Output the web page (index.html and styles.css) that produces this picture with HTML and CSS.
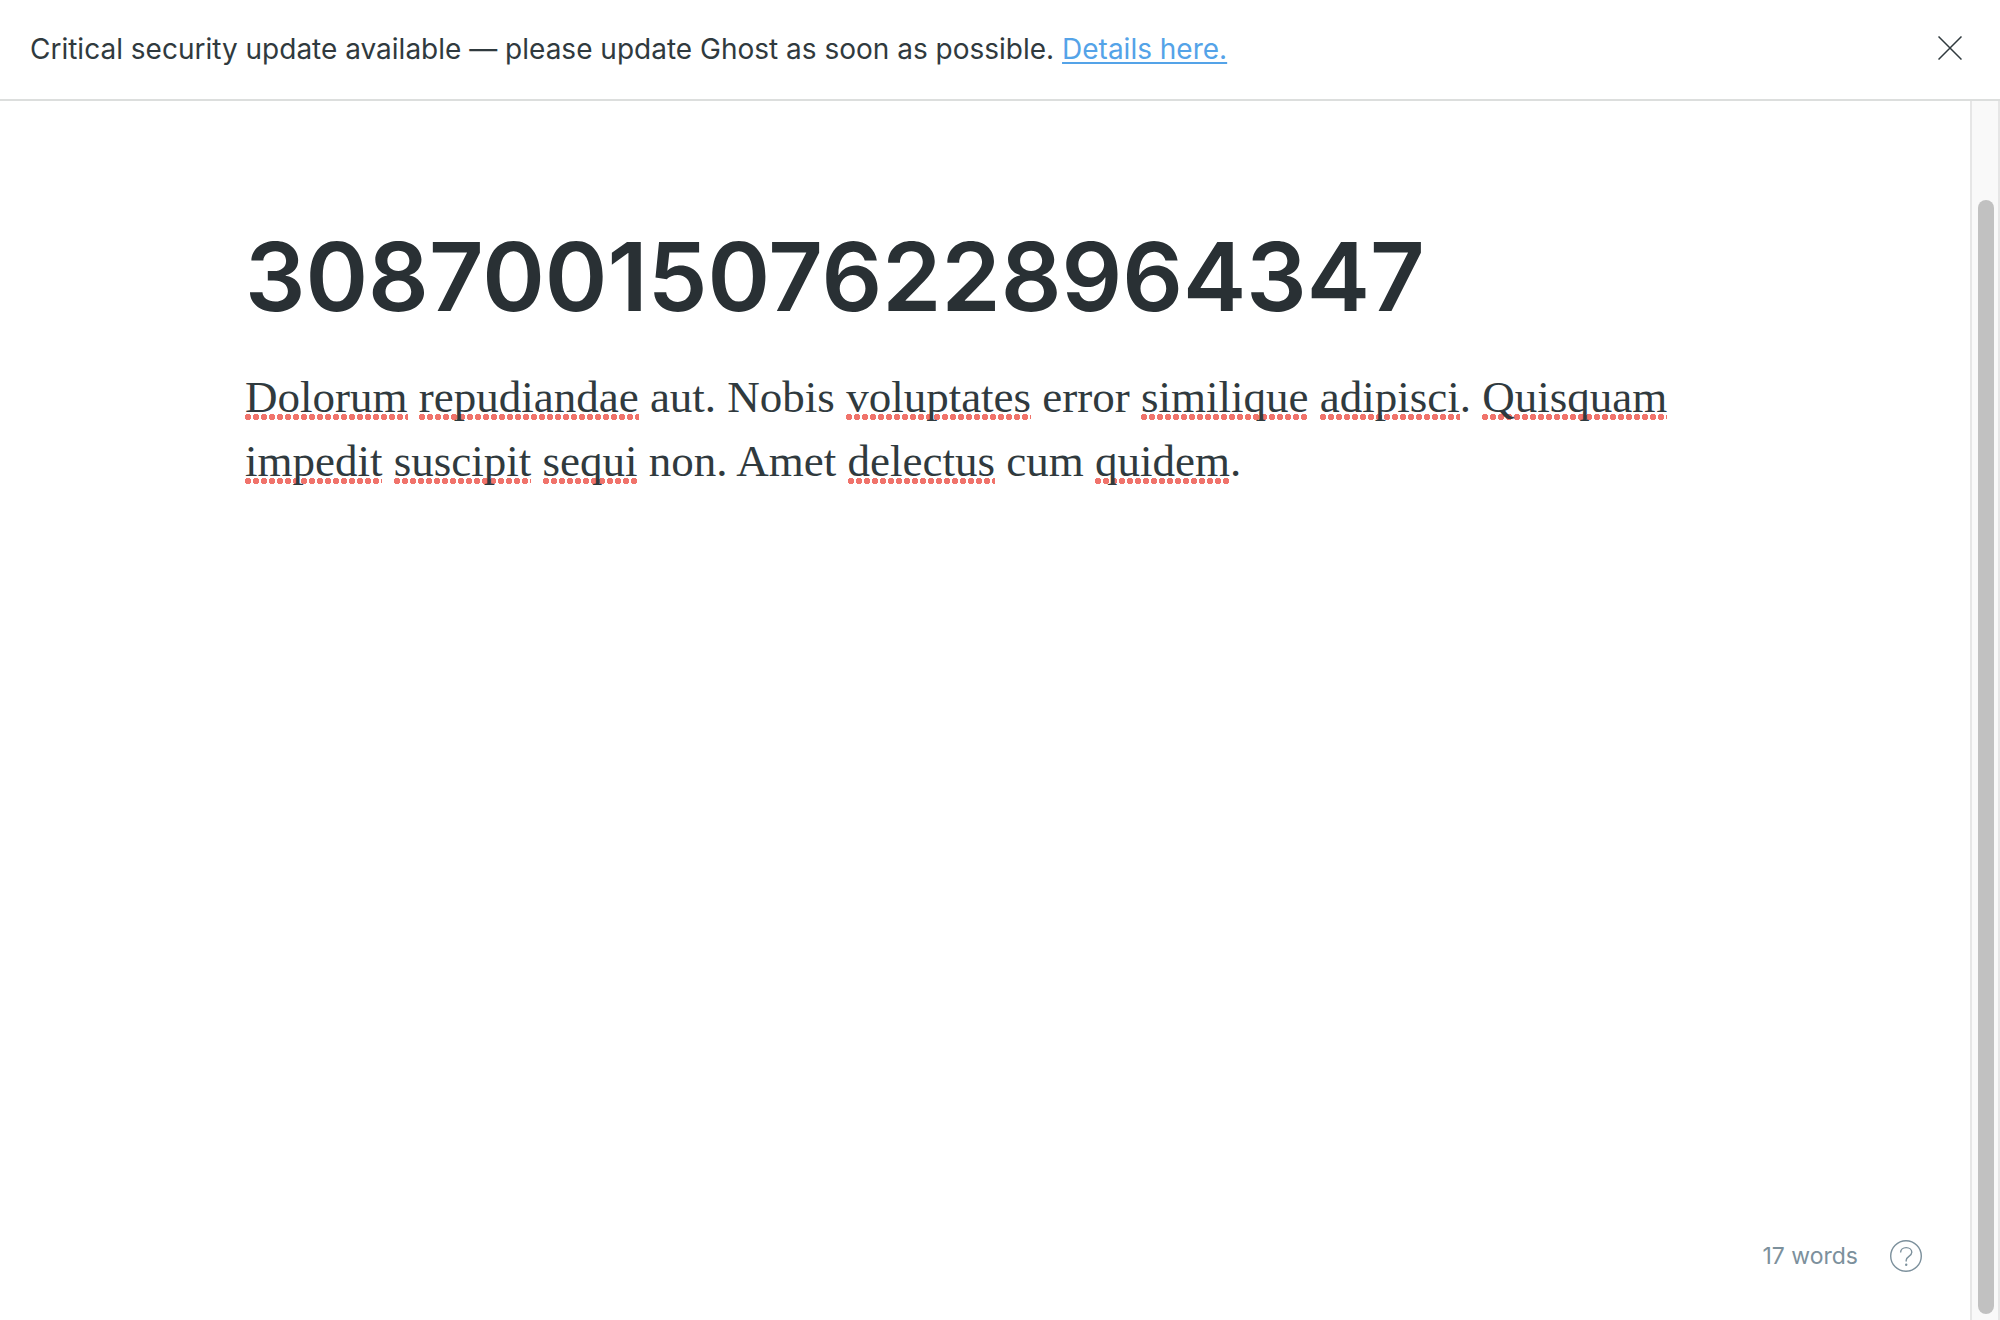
FILE: index.html
```html
<!DOCTYPE html>
<html lang="en">
<head>
  <meta charset="utf-8">
  <title>Editor</title>
  <link rel="stylesheet" href="styles.css">
</head>
<body>
  <div class="app">
    <header class="alert">
      <p class="alert-text">Critical security update available — please update Ghost as soon as possible. <a class="alert-link" href="#details">Details here.</a></p>
      <button class="icon-button" type="button" aria-label="Close">
        <svg class="close-icon" viewBox="0 0 24 24" aria-hidden="true"><path d="M.5.5l23 23M23.5.5l-23 23"/></svg>
      </button>
    </header>
    <div class="workspace">
      <main class="editor">
        <div class="column">
          <input class="title" type="text" aria-label="Post title" value="30870015076228964347" spellcheck="false">
          <div class="body" role="textbox" aria-label="Post body" aria-multiline="true" contenteditable="true" spellcheck="false"><p class="paragraph"><span class="misspelt">Dolorum</span> <span class="misspelt">repudiandae</span> aut. Nobis <span class="misspelt">voluptates</span> error <span class="misspelt">similique</span> <span class="misspelt">adipisci</span>. <span class="misspelt">Quisquam</span> <span class="misspelt">impedit</span> <span class="misspelt">suscipit</span> <span class="misspelt">sequi</span> non. Amet <span class="misspelt">delectus</span> cum <span class="misspelt">quidem</span>.</p></div>
        </div>
        <footer class="status">
          <span class="word-count">17 words</span>
          <a class="help" href="#help" aria-label="Help">
            <svg class="help-icon" viewBox="0 0 32 32" aria-hidden="true"><circle cx="16" cy="16" r="15.3"/><path d="M10.600 12.600c0-3 2.400-5 5.600-5s5.600 2 5.600 4.700c0 4.100-5.600 4-5.600 7.900v1.200"/><circle class="help-dot" cx="16.200" cy="24.800" r="1.200"/></svg>
          </a>
        </footer>
      </main>
      <div class="scrollbar" aria-hidden="true"><div class="thumb"></div></div>
    </div>
  </div>
</body>
</html>
```
FILE: styles.css
```css
* {
  box-sizing: border-box;
}

body {
  margin: 0;
  background: #fff;
  color: #303a3e;
  font-family: Inter, sans-serif;
}

.app {
  display: flex;
  flex-direction: column;
  min-height: 100vh;
}

.alert {
  display: flex;
  align-items: flex-start;
  justify-content: space-between;
  gap: 32px;
  padding: 28px 38px 29px 30px;
  border-bottom: 2px solid #dcdedd;
}

.alert-text {
  margin: 0;
  font-size: 28px;
  line-height: 42px;
}

.alert-link {
  color: #54a3e8;
  text-decoration-thickness: 2px;
  text-underline-offset: 3px;
  text-decoration-skip-ink: none;
}

.icon-button {
  display: flex;
  padding: 8px 0;
  border: 0;
  background: none;
  color: inherit;
}

.close-icon {
  width: 24px;
  height: 24px;
  fill: none;
  stroke: currentColor;
  stroke-width: 1.5;
}

.workspace {
  display: flex;
  flex: 1;
}

.editor {
  display: flex;
  flex: 1;
  flex-direction: column;
  min-width: 0;
}

.column {
  flex: 1;
  width: 100%;
  max-width: 1480px;
  margin: 0 auto;
  padding-top: 120px;
}

.title {
  display: block;
  width: 100%;
  height: 112px;
  padding: 0;
  border: 0;
  outline: 0;
  background: none;
  color: #293034;
  font: 600 95px/112px Inter, sans-serif;
}

.body {
  margin-top: 32px;
  outline: 0;
  font: 45px/64px "Liberation Serif", serif;
}

.paragraph {
  margin: 0;
}

.misspelt {
  background: radial-gradient(circle at 3px 3px, #f0736b 2px, #f0736b 3px, transparent 3px) left bottom 2px / 8px 6px repeat-x;
}

.status {
  display: flex;
  align-items: center;
  justify-content: flex-end;
  gap: 32px;
  padding: 48px;
  color: #7c909c;
  font-size: 23px;
  line-height: 32px;
}

.help {
  display: flex;
  color: inherit;
}

.help-icon {
  width: 32px;
  height: 32px;
  fill: none;
  stroke: currentColor;
  stroke-width: 1.4;
}

.help-dot {
  fill: currentColor;
  stroke: none;
}

.scrollbar {
  display: flex;
  width: 30px;
  padding: 99px 4px 6px 6px;
  border: solid #e6e6e6;
  border-width: 0 2px;
  background: #f9f9f9;
}

.thumb {
  flex: 1;
  border-radius: 8px;
  background: #c1c1c1;
}
```
